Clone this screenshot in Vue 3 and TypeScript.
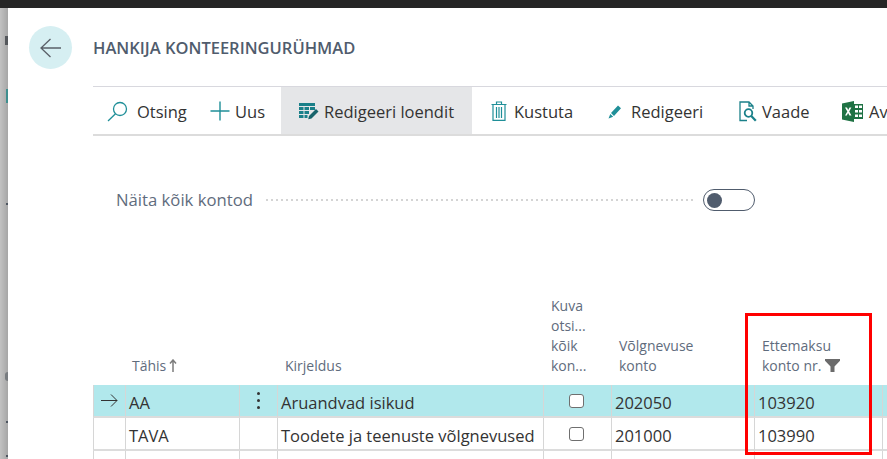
<script setup lang="ts">
interface Row { code: string; desc: string; debt: string; pre: string; current?: boolean }
const rows: Row[] = [
  { code: 'AA', desc: 'Aruandvad isikud', debt: '202050', pre: '103920', current: true },
  { code: 'TAVA', desc: 'Toodete ja teenuste võlgnevused', debt: '201000', pre: '103990' },
  { code: '', desc: '', debt: '', pre: '' },
]
</script>

<template>
  <div class="page">
    <div class="topbar"></div>
    <div class="body">
      <aside class="strip">
        <i class="mark m1"></i><i class="mark m2"></i><i class="mark m3"></i><i class="mark m4"></i><i class="mark m5"></i><i class="mark m6"></i>
      </aside>
      <main class="main">
        <header class="head">
          <button class="back" aria-label="Tagasi">
            <svg width="22" height="20" viewBox="0 0 22 20" fill="none" stroke="#5a6068" stroke-width="1.3"><path d="M1 10h20M10.500 1 1 10l9.500 9"/></svg>
          </button>
          <h1 class="title">HANKIJA KONTEERINGURÜHMAD</h1>
        </header>

        <nav class="toolbar">
          <div class="tool otsing">
            <svg width="21" height="21" viewBox="0 0 21 21" fill="none" stroke="#1f8f98" stroke-width="1.3"><circle cx="13" cy="8" r="6.500"/><path d="M8.500 12.800 1 20"/></svg>
            <span>Otsing</span>
          </div>
          <div class="tool uus">
            <svg width="20" height="20" viewBox="0 0 20 20" fill="none" stroke="#1f8f98" stroke-width="1.400"><path d="M10 0.500v19M0.500 10h19"/></svg>
            <span>Uus</span>
          </div>
          <div class="tool active">
            <svg width="20" height="18" viewBox="0 0 20 18"><path fill="#1a8089" d="M0 1h16v3H0zM0 5h4.500v3H0zM5.500 5h4.500v3H5.500zM11 5h5v3h-5zM0 9h4.500v3H0zM5.500 9h4.500v3H5.500zM0 13h4.500v3H0zM5.500 13h3v3h-3z"/><path fill="#17636b" d="M10 14l7-7 2.500 2.500-7 7-3.300.8z"/></svg>
            <span>Redigeeri loendit</span>
          </div>
          <div class="tool kustuta">
            <svg width="16" height="20" viewBox="0 0 16 20" fill="none" stroke="#1f8f98" stroke-width="1.200"><path d="M0.500 3.500h15M5.500 3.500V1h5v2.500M2 3.500V19.400h12V3.500M5.500 6v11M8 6v11M10.500 6v11"/></svg>
            <span>Kustuta</span>
          </div>
          <div class="tool redigeeri">
            <svg width="14" height="15" viewBox="0 0 14 15"><path fill="#1f8f98" d="M3 9 10 1.500l3 2.800L6 12zM2.300 10l2.900 2.700L0.500 14.500z"/></svg>
            <span>Redigeeri</span>
          </div>
          <div class="tool vaade">
            <svg width="19" height="21" viewBox="0 0 19 21" fill="none" stroke="#1a8089" stroke-width="1.300"><path d="M8 19.500H1V1h9l4 4v3M10 1v4h4"/><circle cx="9.500" cy="12" r="3.800" stroke-width="1.800"/><path d="m12.300 15 4.500 4.800" stroke-width="2.200"/></svg>
            <span>Vaade</span>
          </div>
          <div class="tool avaexcel">
            <svg width="21" height="21" viewBox="0 0 21 21"><path fill="#1f7244" d="M0 2.500 12 0v21L0 18.500z"/><path fill="#1f7244" d="M12 3h9v15h-9z"/><path fill="#fff" d="M13 4.500h3v2.500h-3zM17 4.500h3v2.500h-3zM13 9h3v2.500h-3zM17 9h3v2.500h-3zM13 13.500h3V16h-3zM17 13.500h3V16h-3z"/><path fill="#fff" d="M3 6.500h2l1.200 2.500 1.300-2.500h1.900l-2.200 4 2.300 4H7.400l-1.300-2.600-1.300 2.600H3l2.300-4z"/></svg>
            <span>Ava</span>
          </div>
        </nav>

        <section class="option">
          <span class="option-label">Näita kõik kontod</span>
          <span class="dots"></span>
          <span class="switch"><span class="knob"></span></span>
        </section>

        <section class="grid">
          <div class="hd"></div>
          <div class="hd code">Tähis
            <svg class="arrow" width="8" height="13" viewBox="0 0 8 13" fill="none" stroke="#7c7c7c" stroke-width="1.500"><path d="M4 13V1M1 4.500 4 1l3 3.500"/></svg>
          </div>
          <div class="hd"></div>
          <div class="hd desc">Kirjeldus</div>
          <div class="hd show">Kuva<br>otsi...<br>kõik<br>kon...</div>
          <div class="hd debt">Võlgnevuse<br>konto</div>
          <div class="hd pre">Ettemaksu<br>konto nr.<svg class="funnel" width="15" height="13" viewBox="0 0 15 13"><path fill="#6b6b6b" d="M0 0h15v1.800L9.500 7.500V13h-4V7.500L0 1.800z"/></svg>
          </div>
          <div class="hd"></div>

          <template v-for="(r, i) in rows" :key="i">
            <div class="cell mark-cell" :class="{ cur: r.current }">
              <svg v-if="r.current" width="17" height="13" viewBox="0 0 17 13" fill="none" stroke="#333" stroke-width="1"><path d="M0 6.500h16M10 0.500l6 6-6 6"/></svg>
            </div>
            <div class="cell" :class="{ cur: r.current }">{{ r.code }}</div>
            <div class="cell menu" :class="{ cur: r.current }">
              <span v-if="r.current" class="kebab"><i></i><i></i><i></i></span>
            </div>
            <div class="cell" :class="{ cur: r.current }">{{ r.desc }}</div>
            <div class="cell check" :class="{ cur: r.current }"><span v-if="r.code" class="box"></span></div>
            <div class="cell" :class="{ cur: r.current }">{{ r.debt }}</div>
            <div class="cell" :class="{ cur: r.current }">{{ r.pre }}</div>
            <div class="cell" :class="{ cur: r.current }"></div>
          </template>
        </section>

        <div class="callout"></div>
      </main>
    </div>
  </div>
</template>

<style>
html, body { margin: 0; overflow: hidden; background: #fff; }
</style>

<style scoped>
.page { width: 887px; height: 459px; display: flex; flex-direction: column; overflow: hidden; font-family: "Open Sans", "Noto Sans", sans-serif; color: #333; }
.topbar { height: 8px; flex: none; background: #262626; }
.body { flex: 1; display: flex; min-height: 0; }
.strip { width: 8px; flex: none; background: linear-gradient(90deg, #c2c2c2, #a6a6a6); position: relative; }
.mark { position: absolute; background: #4d5560; }
.m1 { left: 5px; top: 28px; width: 3px; height: 9px; background: #55585c; }
.m2 { left: 6px; top: 81px; width: 2px; height: 14px; background: #3f8f8f; }
.m3 { left: 6px; top: 195px; width: 2px; height: 2px; }
.m4 { left: 5px; top: 364px; width: 3px; height: 9px; background: #787c80; border-radius: 3px 0 0 3px; }
.m5 { left: 6px; top: 413px; width: 2px; height: 2px; }
.m6 { left: 6px; top: 447px; width: 2px; height: 2px; }
.main { flex: 1; min-width: 0; position: relative; background: #fff; }

.head { height: 78px; display: flex; align-items: flex-start; }
.back { width: 43px; height: 43px; margin: 18px 0 0 21px; padding: 0; border: 0; border-radius: 50%; background: #d6eff2; display: flex; align-items: center; justify-content: center; }
.title { margin: 30px 0 0 21px; font-size: 16.500px; line-height: 20px; font-weight: 600; letter-spacing: 0; color: #505c6d; white-space: nowrap; }

.toolbar { margin-left: 85px; height: 47px; display: flex; align-items: stretch; border-top: 1px solid #d8d8de; border-bottom: 2px solid #dcdcdc; overflow: hidden; white-space: nowrap; font-size: 16.500px; color: #333; }
.tool { display: flex; align-items: center; flex: none; box-sizing: border-box; padding-top: 1px; }
.tool span { display: block; }
.otsing { width: 103px; padding-left: 14px; gap: 9px; }
.uus { width: 85px; padding-left: 14px; gap: 5px; }
.active { width: 191px; padding-left: 18px; gap: 5px; background: #e5e6e8; }
.kustuta { width: 117px; padding-left: 19px; gap: 7px; }
.redigeeri { width: 150px; padding-left: 19px; gap: 9px; }
.vaade { width: 103px; gap: 4px; }
.avaexcel { gap: 6px; }

.option { margin: 50px 0 0 108px; height: 26px; width: 639px; display: flex; align-items: center; }
.option-label { font-size: 16.700px; color: #5f6c7d; flex: none; }
.dots { flex: 1; height: 2px; margin: 2px 8px 0 13px; background: radial-gradient(circle at 1px 1px, #d4d4d4 0.900px, transparent 1.100px) 0 0 / 5px 2px repeat-x; }
.switch { flex: none; width: 52px; height: 22px; margin-top: 2px; box-sizing: border-box; border: 1px solid #505c6d; border-radius: 11px; display: flex; align-items: center; padding-left: 3px; }
.knob { width: 15px; height: 15px; border-radius: 50%; background: #505c6d; }

.grid { position: absolute; left: 85px; top: 282px; width: 794px; display: grid; grid-template-columns: 32px 114px 38px 266px 68px 143px 128px 5px; grid-template-rows: 95px 33px 33px 33px; font-size: 16.500px; }
.hd { align-self: end; font-size: 14px; line-height: 20px; color: #5f6c7d; padding: 0 0 9px 8px; }
.code { padding-left: 7px; }
.arrow { margin-left: -1px; vertical-align: -1px; }
.funnel { margin-left: 4px; vertical-align: -1px; }
.cell { box-sizing: border-box; height: 33px; padding: 3px 3px 0; display: flex; align-items: center; border-left: 1px solid #d6d6d6; border-bottom: 2px solid #dcdcdc; background: #fff; white-space: nowrap; color: #333; }
.cell.cur { background: #b1e8ec; }
.mark-cell { justify-content: center; padding: 0; }
.menu { justify-content: center; padding: 0; }
.kebab { display: flex; flex-direction: column; gap: 4px; }
.kebab i { width: 3px; height: 3px; border-radius: 50%; background: #333; }
.check { justify-content: center; padding: 0 2px 0 0; }
.box { width: 15px; height: 14px; box-sizing: border-box; border: 1px solid #6f6f6f; border-radius: 3px; background: #fff; }

.callout { position: absolute; left: 737px; top: 305px; width: 127px; height: 142px; box-sizing: border-box; border: 3px solid #f00; }
</style>
